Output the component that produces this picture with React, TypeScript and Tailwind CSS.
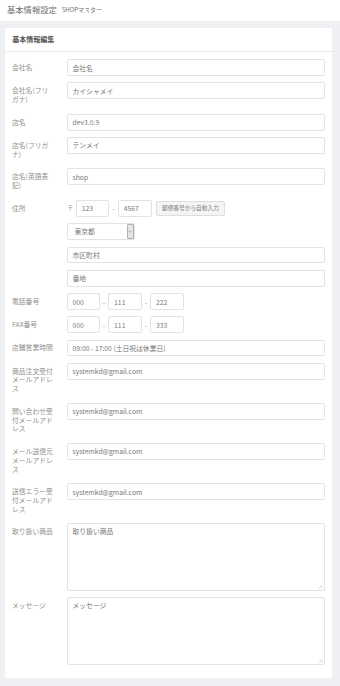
import React from "react";

const F = { fontFamily: '"Noto Sans CJK JP", "Noto Sans", sans-serif' };

function Input({ value, className = "" }: { value: string; className?: string }) {
  return (
    <div
      className={`h-[16.8px] border border-[#dfe4e4] rounded-[2px] bg-white pl-[5px] flex items-center text-[6.8px] text-[#777] whitespace-nowrap overflow-hidden ${className}`}
    >
      {value}
    </div>
  );
}

function Label({ children }: { children: React.ReactNode }) {
  return (
    <div className="w-[54.5px] shrink-0 pr-[12px]">
      <div className="pt-[3.8px] pb-[3.6px] text-[6.8px] leading-[8.8px] text-[#909090] break-all">{children}</div>
    </div>
  );
}

function Row({ label, children }: { label: React.ReactNode; children: React.ReactNode }) {
  return (
    <div className="flex">
      <Label>{label}</Label>
      <div className="flex-1 min-w-0">{children}</div>
    </div>
  );
}

function Dash() {
  return <span className="w-[8.3px] text-center text-[6.8px] text-[#909090] shrink-0">-</span>;
}

function TextArea({ value }: { value: string }) {
  return (
    <div className="relative">
      <textarea
        readOnly
        defaultValue={value}
        className="block w-full h-[67.4px] resize-none border border-[#dfe4e4] rounded-[2px] bg-white px-[5px] pt-[3px] text-[6.8px] leading-[9px] text-[#777] outline-none"
        style={F}
      />
      <svg className="absolute right-[2px] bottom-[2px]" width="5" height="5" viewBox="0 0 5 5">
        <path d="M4.5 0.8 L0.8 4.5 M4.5 2.8 L2.8 4.5" stroke="#bbb" strokeWidth="0.6" />
      </svg>
    </div>
  );
}

export default function App() {
  return (
    <div className="w-[340px] min-h-[686px] bg-[#eef0f3]" style={F}>
      <div className="h-[21px] bg-white flex items-center pl-[7px] pb-[2px]">
        <span className="text-[8.3px] text-[#707070]">基本情報設定</span>
        <span className="ml-[5px] text-[6px] text-[#707070]">SHOPマスター</span>
      </div>
      <div className="pt-[7px] pl-[5px] pr-[8.3px] pb-[8px]">
        <div className="bg-white">
          <div className="h-[24.3px] border-b border-[#e6ebeb] flex items-center pl-[7.3px]">
            <span className="text-[7px] font-bold text-[#555]">基本情報編集</span>
          </div>
          <div className="pt-[7px] pl-[7px] pr-[6.7px] pb-[13px] flex flex-col gap-[6.4px]">
            <Row label="会社名">
              <Input value="会社名" />
            </Row>
            <Row label="会社名(フリガナ)">
              <Input value="カイシャメイ" />
            </Row>
            <Row label="店名">
              <Input value="dev3.0.9" />
            </Row>
            <Row label="店名(フリガナ)">
              <Input value="テンメイ" />
            </Row>
            <Row label="店名(英語表記)">
              <Input value="shop" />
            </Row>
            <Row label="住所">
              <div className="flex flex-col gap-[6.7px]">
                <div className="flex items-center">
                  <span className="text-[5.5px] text-[#909090] ml-[1px] w-[8.3px]">〒</span>
                  <Input value="123" className="w-[33.7px]" />
                  <Dash />
                  <Input value="4567" className="w-[34px]" />
                  <div className="ml-[4.3px] h-[15px] w-[68.7px] bg-[#f4f4f4] border border-[#dedede] rounded-[2px] flex items-center justify-center text-[5.7px] text-[#808080] whitespace-nowrap">
                    郵便番号から自動入力
                  </div>
                </div>
                <div className="w-[68.3px] h-[16.6px] border border-[#dfe4e4] rounded-[2px] flex items-stretch">
                  <div className="flex-1 flex items-center pl-[7px] text-[6.8px] text-[#777]">東京都</div>
                  <div className="w-[7px] bg-[#e6e6e6] border border-[#b0b0b0] rounded-[1px] flex items-center justify-center">
                    <svg width="4" height="3" viewBox="0 0 4 3">
                      <path d="M0.5 0.8 L2 2.2 L3.5 0.8" stroke="#777" strokeWidth="0.5" fill="none" />
                    </svg>
                  </div>
                </div>
                <Input value="市区町村" />
                <Input value="番地" />
              </div>
            </Row>
            <Row label="電話番号">
              <div className="flex items-center">
                <Input value="000" className="w-[33.3px]" />
                <Dash />
                <Input value="111" className="w-[33.7px]" />
                <Dash />
                <Input value="222" className="w-[33.7px]" />
              </div>
            </Row>
            <Row label="FAX番号">
              <div className="flex items-center">
                <Input value="000" className="w-[33.3px]" />
                <Dash />
                <Input value="111" className="w-[33.7px]" />
                <Dash />
                <Input value="333" className="w-[33.7px]" />
              </div>
            </Row>
            <Row label="店舗営業時間">
              <Input value="09:00 - 17:00 (土日祝は休業日)" />
            </Row>
            <Row label="商品注文受付メールアドレス">
              <Input value="systemkd@gmail.com" />
            </Row>
            <Row label="問い合わせ受付メールアドレス">
              <Input value="systemkd@gmail.com" />
            </Row>
            <Row label="メール送信元メールアドレス">
              <Input value="systemkd@gmail.com" />
            </Row>
            <Row label="送信エラー受付メールアドレス">
              <Input value="systemkd@gmail.com" />
            </Row>
            <Row label="取り扱い商品">
              <TextArea value="取り扱い商品" />
            </Row>
            <Row label="メッセージ">
              <TextArea value="メッセージ" />
            </Row>
          </div>
        </div>
        <div className="mt-[8px] h-[20px] bg-white" />
      </div>
    </div>
  );
}
